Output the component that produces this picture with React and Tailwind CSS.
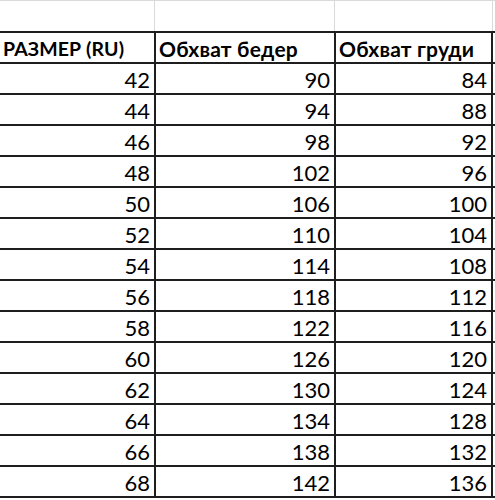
const rows = [
  [42, 90, 84],
  [44, 94, 88],
  [46, 98, 92],
  [48, 102, 96],
  [50, 106, 100],
  [52, 110, 104],
  [54, 114, 108],
  [56, 118, 112],
  [58, 122, 116],
  [60, 126, 120],
  [62, 130, 124],
  [64, 134, 128],
  [66, 138, 132],
  [68, 142, 136],
];

function Row({ cells, header }) {
  return (
    <div className="flex h-[31px] border-b-2 border-[#1e1e1e]">
      <div
        className={`w-[156px] shrink-0 border-r-2 border-[#1e1e1e] flex items-center pt-[2px] ${
          header ? "justify-start pl-[3px] font-bold text-[19.5px] tracking-[0.1px]" : "justify-end pr-[4px]"
        }`}
      >
        {cells[0]}
      </div>
      <div
        className={`w-[180px] shrink-0 border-r-2 border-[#1e1e1e] flex items-center pt-[2px] ${
          header ? "justify-start pl-[3px] font-bold text-[21px] tracking-[0.2px]" : "justify-end pr-[4px]"
        }`}
      >
        {cells[1]}
      </div>
      <div
        className={`w-[157px] shrink-0 border-r-2 border-[#1e1e1e] flex items-center pt-[2px] ${
          header ? "justify-start pl-[3px] font-bold text-[21px] tracking-[0.2px]" : "justify-end pr-[4px]"
        }`}
      >
        {cells[2]}
      </div>
    </div>
  );
}

export default function App() {
  return (
    <div className="w-[495px] h-[500px] bg-white overflow-hidden text-black text-[22px] leading-none font-['Lato','Noto_Sans',sans-serif]">
      <div className="flex h-[31px] border-t border-[#dadada]">
        <div className="w-[155px] shrink-0 border-r border-[#dadada]"></div>
        <div className="w-[180px] shrink-0 border-r border-[#dadada]"></div>
        <div className="w-[158px] shrink-0 border-r border-[#dadada]"></div>
      </div>
      <div className="border-t-2 border-[#1e1e1e]">
        <Row header cells={["РАЗМЕР (RU)", "Обхват бедер", "Обхват груди"]} />
        {rows.map((r) => (
          <Row key={r[0]} cells={r} />
        ))}
      </div>
    </div>
  );
}
